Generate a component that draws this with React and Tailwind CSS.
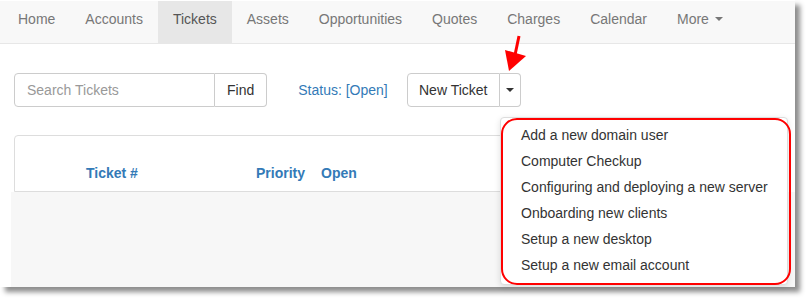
import React from 'react';

const navItems = ['Home', 'Accounts', 'Tickets', 'Assets', 'Opportunities', 'Quotes', 'Charges', 'Calendar'];

const templates = [
  'Add a new domain user',
  'Computer Checkup',
  'Configuring and deploying a new server',
  'Onboarding new clients',
  'Setup a new desktop',
  'Setup a new email account',
];

const Caret = ({ color = '#333' }) => (
  <svg width="8" height="4" viewBox="0 0 8 4" className="inline-block">
    <polygon points="0,0 8,0 4,4" fill={color} />
  </svg>
);

export default function App() {
  return (
    <div className="w-[808px] h-[301px] bg-white text-[14px]" style={{ fontFamily: '"Liberation Sans", Arial, sans-serif' }}>
      <div className="relative w-[795px] h-[287px] bg-white pt-px shadow-[5px_5px_5px_rgba(0,0,0,0.45)]">
        {/* top nav */}
        <nav className="h-[43px] bg-[#f8f8f8] border-b border-[#e7e7e7] flex pl-[3px]">
          {navItems.map((item) => (
            <a
              key={item}
              className={`px-[15px] pb-[6px] flex items-center h-full ${item === 'Tickets' ? 'bg-[#e7e7e7] text-[#555]' : 'text-[#777]'}`}
            >
              {item}
            </a>
          ))}
          <a className="px-[15px] pb-[6px] flex items-center h-full text-[#777] gap-[6px]">
            More <Caret color="#777" />
          </a>
        </nav>

        {/* search + actions */}
        <div className="flex items-center mt-[29px] ml-[14px] h-[34px]">
          <div className="flex h-full">
            <div className="w-[201px] h-full border border-[#ccc] rounded-l-[4px] flex items-center pl-[12px] text-[#999]">
              Search Tickets
            </div>
            <button className="h-full px-[12px] border border-l-0 border-[#ccc] rounded-r-[4px] text-[#333] bg-white">
              Find
            </button>
          </div>
          <a className="ml-[31px] text-[#337ab7]">Status: [Open]</a>
          <div className="flex h-full ml-[19px]">
            <button className="h-full w-[93px] border border-[#ccc] rounded-l-[4px] text-[#333] bg-white">
              New Ticket
            </button>
            <button className="h-full w-[21px] border border-l-0 border-[#ccc] rounded-r-[4px] bg-white flex items-center justify-center">
              <Caret />
            </button>
          </div>
        </div>

        {/* tickets panel header */}
        <div className="mt-[28px] ml-[14px] w-[773px] h-[57px] border border-[#ddd] rounded-t-[4px] flex items-center font-bold text-[#337ab7] pt-[19px]">
          <span className="ml-[71px] w-[170px]">Ticket #</span>
          <span className="w-[65px]">Priority</span>
          <span>Open</span>
        </div>
        <div className="ml-[11px] h-[95px] bg-[#f7f7f7]" />

        {/* new ticket dropdown */}
        <div className="absolute left-[500px] top-[117px] w-[288px] h-[168px] bg-white border border-[#ddd] rounded-[4px] pt-[4px] shadow-[0_2px_6px_rgba(0,0,0,0.12)]">
          {templates.map((t) => (
            <div key={t} className="h-[26px] leading-[26px] pl-[20px] text-[#333]">
              {t}
            </div>
          ))}
        </div>

        {/* annotation */}
        <div className="absolute left-[501px] top-[118px] w-[290px] h-[167px] border-2 border-[#f00] rounded-[16px] pointer-events-none" />
        <svg className="absolute left-[500px] top-[33px]" width="30" height="42" viewBox="0 0 30 42">
          <line x1="19" y1="3" x2="15" y2="22" stroke="#f00" strokeWidth="3" />
          <polygon points="5,17 26,23 9,38" fill="#f00" />
        </svg>
      </div>
    </div>
  );
}
